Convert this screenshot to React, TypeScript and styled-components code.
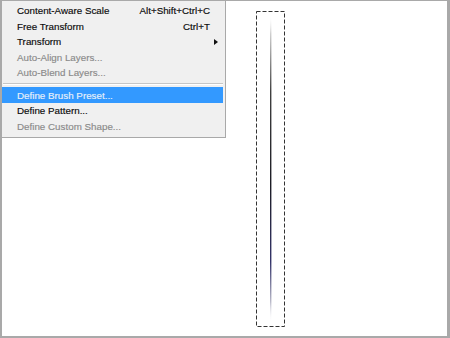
import styled, { createGlobalStyle } from 'styled-components';

const GlobalStyle = createGlobalStyle`
  html, body {
    margin: 0;
    padding: 0;
    background: #ffffff;
  }
  body {
    font-family: 'Liberation Sans', Arial, sans-serif;
  }
`;

const Frame = styled.div`
  position: relative;
  box-sizing: border-box;
  width: 450px;
  height: 338px;
  background: #ffffff;
  border-style: solid;
  border-color: #a9a9a9;
  border-width: 1px 3px 2px 2px;
  overflow: hidden;
`;

const Selection = styled.svg`
  position: absolute;
  left: 254px;
  top: 10px;
`;

const Menu = styled.div`
  position: absolute;
  left: 0;
  top: -1px;
  box-sizing: border-box;
  width: 224px;
  height: 138px;
  padding: 3px 2px 3px 0;
  background: #f0f0f0;
  border-right: 1px solid #a9a9a9;
  border-bottom: 1px solid #a9a9a9;
  display: flex;
  flex-direction: column;
`;

const Row = styled.div<{ $active?: boolean; $disabled?: boolean; $tall?: boolean }>`
  display: flex;
  align-items: center;
  height: ${(p) => (p.$tall ? '16px' : '15.5px')};
  padding: 0 5px 0 15px;
  font-size: 9.8px;
  color: ${(p) => (p.$active ? '#e8f0fa' : p.$disabled ? '#8a8a8a' : '#0a0a0a')};
  -webkit-text-stroke: 0.15px currentColor;
  background: ${(p) => (p.$active ? '#3399ff' : 'transparent')};
  white-space: nowrap;
`;

const Label = styled.span`
  flex: 1;
`;

const Shortcut = styled.span`
  text-align: right;
`;

const SubSlot = styled.span`
  display: flex;
  justify-content: flex-end;
  width: 8px;
`;

const Arrow = styled.span`
  width: 0;
  height: 0;
  border-left: 4px solid #111111;
  border-top: 3.5px solid transparent;
  border-bottom: 3.5px solid transparent;
`;

const Separator = styled.div`
  height: 6.5px;
  display: flex;
  align-items: center;
  margin-left: 1px;

  &::after {
    content: '';
    flex: 1;
    border-top: 1px solid #c6c6c6;
    border-bottom: 1px solid #ffffff;
  }
`;

type Item = {
  label: string;
  shortcut?: string;
  sub?: boolean;
  disabled?: boolean;
  active?: boolean;
};

const topItems: Item[] = [
  { label: 'Content-Aware Scale', shortcut: 'Alt+Shift+Ctrl+C' },
  { label: 'Free Transform', shortcut: 'Ctrl+T' },
  { label: 'Transform', sub: true },
  { label: 'Auto-Align Layers...', disabled: true },
  { label: 'Auto-Blend Layers...', disabled: true },
];

const bottomItems: Item[] = [
  { label: 'Define Brush Preset...', active: true },
  { label: 'Define Pattern...' },
  { label: 'Define Custom Shape...', disabled: true },
];

const MenuRow = ({ item }: { item: Item }) => (
  <Row $active={item.active} $disabled={item.disabled} $tall={item.active}>
    <Label>{item.label}</Label>
    {item.shortcut && <Shortcut>{item.shortcut}</Shortcut>}
    <SubSlot>{item.sub && <Arrow />}</SubSlot>
  </Row>
);

const App = () => {
  return (
    <>
      <GlobalStyle />
      <Frame>
        <Selection width="30" height="317" viewBox="0 0 30 317">
          <defs>
            <linearGradient id="stroke" x1="0" y1="0" x2="0" y2="1">
              <stop offset="0" stopColor="#ffffff" stopOpacity="0" />
              <stop offset="0.06" stopColor="#d0d0d0" />
              <stop offset="0.25" stopColor="#404040" />
              <stop offset="0.55" stopColor="#1c1c24" />
              <stop offset="0.8" stopColor="#34346a" />
              <stop offset="0.93" stopColor="#b8b8c8" />
              <stop offset="1" stopColor="#ffffff" stopOpacity="0" />
            </linearGradient>
          </defs>
          <rect
            x="0.5"
            y="0.5"
            width="28"
            height="315"
            fill="none"
            stroke="#333333"
            strokeWidth="1"
            strokeDasharray="4 2"
          />
          <rect x="14" y="4" width="1.4" height="308" fill="url(#stroke)" />
        </Selection>
        <Menu>
          {topItems.map((item) => (
            <MenuRow key={item.label} item={item} />
          ))}
          <Separator />
          {bottomItems.map((item) => (
            <MenuRow key={item.label} item={item} />
          ))}
        </Menu>
      </Frame>
    </>
  );
};

export default App;
